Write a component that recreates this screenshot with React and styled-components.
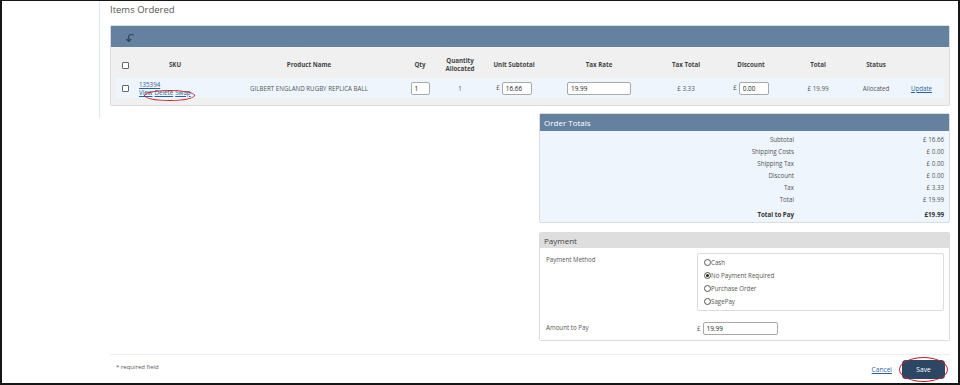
import React from 'react';
import styled, { createGlobalStyle } from 'styled-components';
import { CornerLeftDown } from 'lucide-react';

const GlobalStyle = createGlobalStyle`
  html, body {
    margin: 0;
    padding: 0;
    background: #ffffff;
  }
  body {
    font-family: "Open Sans", "Noto Sans", Arial, sans-serif;
    color: #555555;
  }
  * { box-sizing: border-box; }
`;

const Frame = styled.div`
  width: 960px;
  height: 385px;
  border: 2px solid #151515;
  border-top-width: 1px;
  display: flex;
  overflow: hidden;
`;

const Sidebar = styled.div`
  width: 98px;
  height: 117px;
  border-right: 1px solid #d9e9f7;
  flex-shrink: 0;
`;

const Main = styled.div`
  flex: 1;
  padding: 0 8px 0 10px;
  display: flex;
  flex-direction: column;
`;

const Title = styled.h2`
  margin: 0;
  font-size: 9.5px;
  font-weight: 400;
  color: #555;
  line-height: 14px;
  padding-top: 2px;
  height: 24px;
`;

const Panel = styled.div`
  border: 1px solid #dcdcdc;
  border-radius: 2px;
  background: ${p => p.$bg || '#f0f0f0'};
`;

const PanelBar = styled.div`
  background: ${p => p.$light ? '#dedede' : '#6581a0'};
  color: ${p => p.$light ? '#444' : '#fff'};
  height: ${p => p.$h || 17}px;
  display: flex;
  align-items: center;
  padding: 0 4px;
  font-size: 8px;
`;

const ArrowBtn = styled.span`
  display: inline-flex;
  margin-left: 10px;
  margin-top: 3px;
  color: #2c3e52;
`;

const ItemsBody = styled.div`
  padding: 5px 5px 7px 5px;
`;

const Table = styled.table`
  width: 828px;
  border-collapse: collapse;
  table-layout: fixed;
  font-size: 6.2px;
`;

const Th = styled.th`
  font-weight: 700;
  color: #444;
  height: 26px;
  text-align: center;
  line-height: 8px;
  padding: 0;
`;

const Row = styled.tr`
  background: #eef5fc;
  height: 20px;
`;

const Td = styled.td`
  text-align: ${p => p.$align || 'center'};
  padding: 0 ${p => p.$pad || 0}px;
  color: #555;
  white-space: nowrap;
`;

const Box = styled.span`
  display: inline-block;
  width: 7px;
  height: 7px;
  border: 1px solid #666;
  background: #fff;
  border-radius: 1px;
  vertical-align: middle;
`;

const Link = styled.a`
  color: #2f5f9b;
  text-decoration: underline;
  cursor: pointer;
`;

const SkuCell = styled.div`
  position: relative;
  display: flex;
  flex-direction: column;
  line-height: 8px;
  padding-top: 1px;
`;

const SkuActions = styled.div`
  display: flex;
  gap: 2px;
`;

const Ring = styled.span`
  position: absolute;
  border: 1.3px solid #c81e2a;
  border-radius: 50%;
  pointer-events: none;
  left: ${p => p.$l}px;
  top: ${p => p.$t}px;
  width: ${p => p.$w}px;
  height: ${p => p.$h}px;
`;

const Input = styled.input`
  width: ${p => p.$w}px;
  height: 13px;
  border: 1px solid #a9a9a9;
  border-radius: 2px;
  font: inherit;
  font-size: 6.4px;
  color: #222;
  padding: 0 3px;
  vertical-align: middle;
  background: #fff;
`;

const Pound = styled.span`
  margin-right: 2px;
`;

const Lower = styled.div`
  display: flex;
  justify-content: flex-end;
  margin-top: 7px;
`;

const RightCol = styled.div`
  width: 411px;
  display: flex;
  flex-direction: column;
  gap: 9px;
`;

const TotalsBody = styled.div`
  padding: 3px 5px 1px 0;
  display: grid;
  grid-template-columns: 254px 1fr;
  font-size: 6.2px;
  row-gap: 0;
`;

const TotalLabel = styled.div`
  text-align: right;
  line-height: 12px;
  margin-top: ${p => p.$gap ? 3 : 0}px;
  font-weight: ${p => p.$bold ? 700 : 400};
  color: ${p => p.$bold ? '#333' : '#555'};
`;

const TotalValue = styled(TotalLabel)``;

const PaymentBody = styled.div`
  padding: 5px 5px 5px 6px;
  display: grid;
  grid-template-columns: 151px 1fr;
  row-gap: 11px;
  font-size: 6.2px;
  background: #fff;
`;

const FieldLabel = styled.div`
  padding-top: ${p => p.$top || 0}px;
`;

const RadioBox = styled.div`
  border: 1px solid #dcdcdc;
  border-radius: 2px;
  padding: 5px 6px 5px 6px;
  display: flex;
  flex-direction: column;
  gap: 6px;
`;

const RadioRow = styled.label`
  display: flex;
  align-items: center;
  line-height: 7px;
`;

const Radio = styled.span`
  width: 7px;
  height: 7px;
  border-radius: 50%;
  border: 1px solid #555;
  background: #fff;
  display: inline-flex;
  align-items: center;
  justify-content: center;
  &::after {
    content: '';
    width: 3px;
    height: 3px;
    border-radius: 50%;
    background: ${p => p.$on ? '#222' : 'transparent'};
  }
`;

const AmountRow = styled.div`
  display: flex;
  align-items: center;
`;

const Footer = styled.div`
  margin-top: 13px;
  border-top: 1px solid #eeeeee;
  display: flex;
  justify-content: space-between;
  padding: 5px 5px 0 6px;
  font-size: 6px;
`;

const Required = styled.span`
  margin-top: 3px;
`;

const Actions = styled.div`
  display: flex;
  align-items: center;
  gap: 10px;
`;

const CancelLink = styled(Link)`
  font-size: 6.6px;
`;

const SaveWrap = styled.span`
  position: relative;
  display: inline-flex;
`;

const SaveButton = styled.button`
  width: 43px;
  height: 19px;
  background: #2c4763;
  color: #fff;
  border: none;
  border-radius: 4px;
  font: inherit;
  font-size: 6.6px;
`;

const cols = [19, 80, 188, 34, 46, 62, 108, 66, 64, 70, 46, 45];

const totals = [
  ['Subtotal', '£ 16.66'],
  ['Shipping Costs', '£ 0.00'],
  ['Shipping Tax', '£ 0.00'],
  ['Discount', '£ 0.00'],
  ['Tax', '£ 3.33'],
  ['Total', '£ 19.99'],
];

const methods = ['Cash', 'No Payment Required', 'Purchase Order', 'SagePay'];

export default function App() {
  return (
    <>
      <GlobalStyle />
      <Frame>
        <Sidebar />
        <Main>
          <Title>Items Ordered</Title>
          <Panel>
            <PanelBar $h={21}>
              <ArrowBtn>
                <CornerLeftDown size={10} strokeWidth={2.6} />
              </ArrowBtn>
            </PanelBar>
            <ItemsBody>
              <Table>
                <colgroup>
                  {cols.map((w, i) => <col key={i} style={{ width: w }} />)}
                </colgroup>
                <thead>
                  <tr>
                    <Th><Box /></Th>
                    <Th>SKU</Th>
                    <Th>Product Name</Th>
                    <Th>Qty</Th>
                    <Th>Quantity<br />Allocated</Th>
                    <Th>Unit Subtotal</Th>
                    <Th>Tax Rate</Th>
                    <Th>Tax Total</Th>
                    <Th>Discount</Th>
                    <Th>Total</Th>
                    <Th>Status</Th>
                    <Th />
                  </tr>
                </thead>
                <tbody>
                  <Row>
                    <Td><Box /></Td>
                    <Td $align="left" $pad={4}>
                      <SkuCell>
                        <Link>135394</Link>
                        <SkuActions>
                          <Link>View</Link>
                          <Link>Delete</Link>
                          <Link>Swap</Link>
                        </SkuActions>
                        <Ring $l={5} $t={10} $w={51} $h={11} />
                      </SkuCell>
                    </Td>
                    <Td>GILBERT ENGLAND RUGBY REPLICA BALL</Td>
                    <Td><Input $w={19} defaultValue="1" /></Td>
                    <Td>1</Td>
                    <Td><Pound>£</Pound><Input $w={30} defaultValue="16.66" /></Td>
                    <Td><Input $w={64} defaultValue="19.99" /></Td>
                    <Td>£ 3.33</Td>
                    <Td><Pound>£</Pound><Input $w={30} defaultValue="0.00" /></Td>
                    <Td>£ 19.99</Td>
                    <Td>Allocated</Td>
                    <Td><Link>Update</Link></Td>
                  </Row>
                </tbody>
              </Table>
            </ItemsBody>
          </Panel>

          <Lower>
            <RightCol>
              <Panel $bg="#eef5fc">
                <PanelBar>Order Totals</PanelBar>
                <TotalsBody>
                  {totals.map(([l, v]) => (
                    <React.Fragment key={l}>
                      <TotalLabel>{l}</TotalLabel>
                      <TotalValue>{v}</TotalValue>
                    </React.Fragment>
                  ))}
                  <TotalLabel $bold $gap>Total to Pay</TotalLabel>
                  <TotalValue $bold $gap>£19.99</TotalValue>
                </TotalsBody>
              </Panel>

              <Panel $bg="#fff">
                <PanelBar $light $h={15}>Payment</PanelBar>
                <PaymentBody>
                  <FieldLabel $top={2}>Payment Method</FieldLabel>
                  <RadioBox>
                    {methods.map(m => (
                      <RadioRow key={m}>
                        <Radio $on={m === 'No Payment Required'} />
                        {m}
                      </RadioRow>
                    ))}
                  </RadioBox>
                  <FieldLabel $top={1}>Amount to Pay</FieldLabel>
                  <AmountRow>
                    <Pound>£</Pound>
                    <Input $w={75} defaultValue="19.99" />
                  </AmountRow>
                </PaymentBody>
              </Panel>
            </RightCol>
          </Lower>

          <Footer>
            <Required>* required field</Required>
            <Actions>
              <CancelLink>Cancel</CancelLink>
              <SaveWrap>
                <SaveButton>Save</SaveButton>
                <Ring $l={-3} $t={-3} $w={49} $h={25} />
              </SaveWrap>
            </Actions>
          </Footer>
        </Main>
      </Frame>
    </>
  );
}
